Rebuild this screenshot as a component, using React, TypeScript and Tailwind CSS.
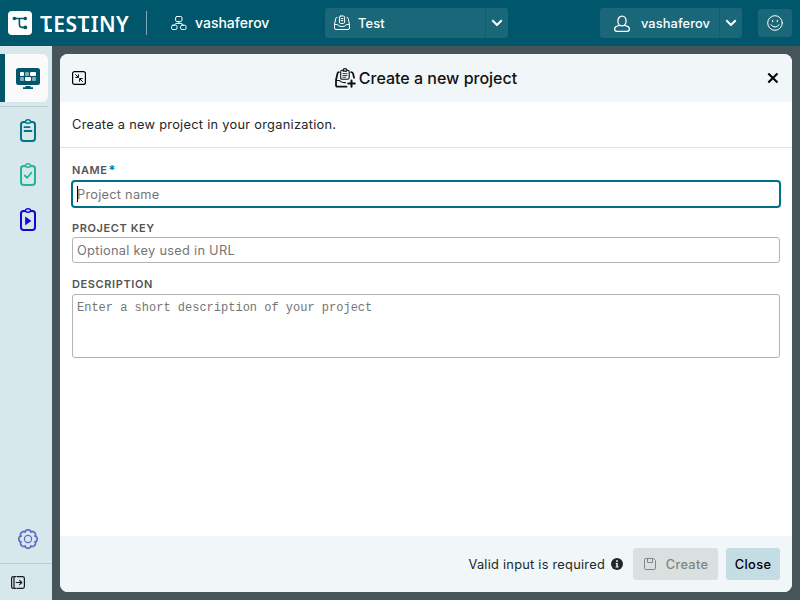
import React from "react";

const Svg = ({
  w,
  h,
  className = "",
  children,
}: {
  w: number;
  h: number;
  className?: string;
  children: React.ReactNode;
}) => (
  <svg
    width={w}
    height={h}
    viewBox={`0 0 ${w} ${h}`}
    fill="none"
    stroke="currentColor"
    strokeLinecap="round"
    strokeLinejoin="round"
    className={`block shrink-0 ${className}`}
  >
    {children}
  </svg>
);

const LogoMark = () => (
  <Svg w={24} h={24}>
    <rect width="24" height="24" rx="4" fill="#fff" stroke="none" />
    <g stroke="#00566b" strokeWidth="1.6">
      <path d="M6.3 7.5H17M11.4 7.5V13.4Q11.4 16.4 14.4 16.4H17" />
    </g>
    <g fill="#00566b" stroke="none">
      <circle cx="6.4" cy="7.5" r="1.8" />
      <circle cx="17.3" cy="7.5" r="1.8" />
      <circle cx="17.3" cy="16.4" r="1.9" />
    </g>
  </Svg>
);

const OrgIcon = () => (
  <Svg w={16} h={16}>
    <rect x="4.6" y="1.5" width="6.4" height="5" rx="1.3" />
    <rect x="0.6" y="10.2" width="5.4" height="4.3" rx="1.3" />
    <rect x="9.6" y="10.2" width="5.4" height="4.3" rx="1.3" />
    <path d="M7.8 6.5V8.4M3.3 10.2L4.8 8.4H10.8L12.3 10.2" />
  </Svg>
);

const ProjectIcon = () => (
  <Svg w={16} h={16}>
    <path d="M3 2.3Q2 2.3 1.8 3.3L.5 9.6V13Q.5 14.5 2 14.5H14Q15.5 14.5 15.5 13V9.6L14.2 3.3Q14 2.3 13 2.3M.7 9.6H3.8Q4.5 11.6 8 11.6T12.2 9.6H15.3" />
    <rect x="5.4" y="1" width="5.2" height="7.4" rx="1.2" />
    <path d="M7.2 3.6H8.8M7.2 5.6H8.8" />
  </Svg>
);

const NewProjectIcon = () => (
  <Svg w={21} h={20}>
    <path d="M3.8 4.2Q2.8 4.2 2.5 5.4L1 12V17Q1 18.7 2.7 18.7H11.5" strokeWidth="1.8" />
    <path d="M16.2 4.2Q17.8 4.2 18.2 6L19 9.8" strokeWidth="1.8" />
    <path d="M1.8 12.5H4.5Q6 14.6 10.5 14.6" strokeWidth="1.2" />
    <path d="M8 2.2H7.3Q5.7 2.2 5.7 3.8V10Q5.7 11.3 7.2 11.3H12.4Q14.2 11.3 14.2 9.8V3.8Q14.2 2.2 12.8 2.2H12" strokeWidth="1.1" />
    <path d="M8.2 3.1V2Q8.2 .6 10 .6T11.8 2V3.1Z" strokeWidth="1.1" />
    <path d="M8 5.6H12M8 7.5H12M8 9.3H10.6" strokeWidth=".8" />
    <path d="M16.5 12.6V18.8M13.3 15.6H19.8" strokeWidth="2" />
  </Svg>
);

const ChevronDown = () => (
  <Svg w={12} h={8}>
    <path d="M2 2L6 6L10 2" strokeWidth="2" strokeLinecap="square" />
  </Svg>
);

const UserIcon = () => (
  <Svg w={18} h={18} className="mt-[2px]">
    <ellipse cx="9" cy="6" rx="4.1" ry="4.9" strokeWidth="1.3" />
    <path d="M6.5 10.3Q1.6 11.3 1.6 13.8Q1.6 16.4 4 16.4H14Q16.4 16.4 16.4 13.8Q16.4 11.3 11.5 10.3" strokeWidth="1.3" />
  </Svg>
);

const SmileIcon = () => (
  <Svg w={16} h={16}>
    <circle cx="8" cy="8" r="7.3" />
    <path d="M5.7 5.2V6.8M10.3 5.2V6.8M4 9.7Q5.3 12 8 12T12 9.7" />
  </Svg>
);

const MonitorIcon = () => (
  <Svg w={24} h={22}>
    <rect width="24" height="17" rx="2.5" fill="#00566b" stroke="none" />
    <path d="M9.5 18H14.5V19.3H17V21H7V19.3H9.5Z" fill="#00566b" stroke="none" />
    <g stroke="none">
      <rect x="4" y="4" width="4" height="4" rx="1" fill="#fff" />
      <rect x="9" y="4" width="4" height="4" rx="1" fill="#8aabb4" />
      <rect x="14" y="4" width="6" height="4" rx="1" fill="#fff" />
      <rect x="4" y="9" width="4" height="4" rx="1" fill="#8aabb4" />
      <rect x="9" y="9" width="6" height="4" rx="1" fill="#fff" />
      <rect x="16" y="9" width="4" height="4" rx="1" fill="#8aabb4" />
    </g>
  </Svg>
);

const Clipboard = ({ className, children }: { className: string; children: React.ReactNode }) => (
  <Svg w={16} h={24} className={className}>
    <rect x="1" y="3" width="14" height="18.9" rx="2.6" strokeWidth="2" />
    <ellipse cx="8" cy="2.5" rx="2.6" ry="1.8" fill="#d6e8ec" strokeWidth="1.4" />
    {children}
  </Svg>
);

const GearIcon = () => {
  const pts: string[] = [];
  for (let i = 0; i <= 96; i++) {
    const a = (i / 96) * Math.PI * 2;
    const r = 7.4 + 1.8 * Math.sqrt(Math.abs(Math.cos(a * 4)));
    pts.push(`${(10 + r * Math.sin(a)).toFixed(2)},${(10 - r * Math.cos(a)).toFixed(2)}`);
  }
  return (
    <Svg w={20} h={20} className="text-[#5f6ac4]">
      <polygon points={pts.join(" ")} strokeWidth="1.7" />
      <circle cx="10" cy="10" r="3.6" strokeWidth="1.2" />
    </Svg>
  );
};

const ExpandIcon = () => (
  <Svg w={14} h={13}>
    <path d="M2.2 .6Q.6 .6 .6 2.2V10.8Q.6 12.4 2.2 12.4" strokeWidth="1.2" />
    <path d="M4.6 .6H3V12.4H4.6M6 .6H11.6Q13.4 .6 13.4 2.4V10.6Q13.4 12.4 11.6 12.4H6" strokeWidth="1.2" />
    <path d="M5.2 6.5H10.8M8.6 4.3L10.8 6.5L8.6 8.7" strokeWidth="1.1" />
  </Svg>
);

const ShrinkIcon = () => (
  <Svg w={14} h={14}>
    <rect x=".6" y=".6" width="12.8" height="12.8" rx="2" strokeWidth="1.2" />
    <path d="M3.3 3.3L6.3 6.3M6.4 3.3V6.4H3.3M10.7 10.7L7.7 7.7M10.7 7.6H7.6V10.7" strokeWidth="1" strokeLinecap="butt" strokeLinejoin="miter" />
  </Svg>
);

const SaveIcon = () => (
  <Svg w={12} h={12}>
    <path d="M.5 1.5Q.5 .5 1.5 .5H9.5L11.5 2.5V10.5Q11.5 11.5 10.5 11.5H1.5Q.5 11.5 .5 10.5ZM3.5 .5V4.5H8.5V.5" />
  </Svg>
);

const InfoIcon = () => (
  <Svg w={12} h={12}>
    <circle cx="6" cy="6" r="6" fill="#222628" stroke="none" />
    <path d="M4.7 5H6.8V8.4H7.6V9.6H4.5V8.4H5.3V6.1H4.7ZM5.2 2.3H6.8V3.9H5.2Z" fill="#f1f6f9" stroke="none" />
  </Svg>
);

/* A wordmark T whose stem ends in a short foot. */
const FootedT = () => (
  <span className="relative mr-[1px] inline-block">
    T
    <span className="absolute bottom-[7px] left-[4.7px] h-[6px] w-[7px] rounded-bl-[4px] border-b-[3px] border-l-[3px] border-white" />
  </span>
);

const Header = () => (
  <header className="flex h-[46px] shrink-0 items-center bg-[#00566b] text-white">
    <div className="flex w-[147px] shrink-0 items-center gap-2 pl-2">
      <LogoMark />
      <div className="pt-px font-['Noto_Sans',sans-serif] text-[21px] leading-[30px] font-semibold tracking-[0.4px] whitespace-nowrap">
        <FootedT />ES<FootedT />INY
      </div>
    </div>
    <div className="-ml-px h-6 w-px bg-[#7fa9b3]" />
    <div className="ml-6 flex w-[154px] items-center gap-2 text-[14px] font-medium">
      <OrgIcon />
      <span className="-mt-[2px]">vashaferov</span>
    </div>
    <div className="flex h-[30px] w-[183px] overflow-hidden rounded-[3px] bg-[#1b677a]">
      <div className="flex w-[161px] items-center gap-2 border-r border-[#0d5e72] pl-[9px] text-[12.8px] font-medium tracking-[0.2px]">
        <ProjectIcon />
        <span className="pt-px">Test</span>
      </div>
      <div className="flex flex-1 items-center justify-center"><ChevronDown /></div>
    </div>
    <div className="ml-auto flex h-[30px] w-[142px] overflow-hidden rounded-[3px] bg-[#1b677a]">
      <div className="flex w-[120px] items-center gap-[10px] border-r border-[#0d5e72] pl-[13px] text-[12.8px] font-medium tracking-[0.1px]">
        <UserIcon />
        <span className="pt-px">vashaferov</span>
      </div>
      <div className="flex flex-1 items-center justify-center"><ChevronDown /></div>
    </div>
    <div className="mr-2 ml-4 flex h-7 w-[34px] items-center justify-center rounded-[3px] bg-[#1b677a]">
      <SmileIcon />
    </div>
  </header>
);

const Sidebar = () => (
  <nav className="flex w-[52px] shrink-0 flex-col bg-[#d6e8ec] pt-2">
    <div className="flex h-12 w-12 items-center justify-center rounded-r-[6px] border-l-[5px] border-[#00566b] bg-[#fafafa] pt-[2px] pl-[3px]">
      <MonitorIcon />
    </div>
    <div className="mt-1 h-px w-12 bg-[#b8cdd2]" />
    <div className="mt-3 flex flex-col items-center gap-5 pl-1">
      <Clipboard className="text-[#007489]">
        <path d="M4.5 8.2H9.5M4.5 12H11.5" strokeWidth="1.8" />
      </Clipboard>
      <Clipboard className="text-[#25b399]">
        <path d="M4.7 12.5L7.2 14.8L11.3 9.8" strokeWidth="1.8" />
      </Clipboard>
      <Clipboard className="mt-px text-[#1805d5]">
        <path d="M5.8 9.3L10.8 12.9L5.8 16.5Z" fill="currentColor" strokeWidth=".8" />
      </Clipboard>
    </div>
    <div className="mt-auto mb-[14px] flex justify-center pl-1"><GearIcon /></div>
    <div className="flex h-[37px] items-center border-t border-[#b8cdd2] pl-[11px] text-[#15191b]">
      <ExpandIcon />
    </div>
  </nav>
);

const Label = ({ children }: { children: React.ReactNode }) => (
  <label className="block h-4 text-[11px] leading-4 font-semibold tracking-[0.6px] text-[#555]">{children}</label>
);

const Dialog = () => (
  <section className="m-2 flex min-w-0 flex-1 flex-col overflow-hidden rounded-[8px] bg-white">
    <div className="flex h-12 shrink-0 items-center justify-between bg-[#f1f6f9] px-3 text-black">
      <ShrinkIcon />
      <h1 className="flex items-center gap-[3px] text-[16px] font-medium text-[#111]">
        <NewProjectIcon />
        Create a new project
      </h1>
      <Svg w={14} h={14}>
        <path d="M2.3 2.5L11.5 11.5M11.5 2.5L2.3 11.5" strokeWidth="2.1" strokeLinecap="butt" />
      </Svg>
    </div>
    <p className="h-[46px] shrink-0 border-b border-[#e0e2e3] px-3 text-[12.8px] leading-[45px] tracking-[0.28px]">
      Create a new project in your organization.
    </p>
    <form className="flex-1 px-3 pt-[14px]">
      <Label>
        NAME<span className="relative top-px ml-[1px] text-[13px] leading-none text-[#007c92]">*</span>
      </Label>
      <div className="relative -mx-px mt-[2px]">
        <input
          className="block h-7 w-full rounded-[4px] border-2 border-[#007089] bg-white px-1 text-[12.8px] tracking-[0.25px] outline-none placeholder:text-[#757575]"
          placeholder="Project name"
        />
        <span className="absolute top-[6px] left-[6px] h-4 w-px bg-black" />
      </div>
      <div className="mt-3">
        <Label>PROJECT KEY</Label>
        <input
          className="mt-px block h-[26px] w-full rounded-[3px] border border-[#b3b3b3] bg-white px-1 text-[12.8px] tracking-[0.28px] outline-none placeholder:text-[#757575]"
          placeholder="Optional key used in URL"
        />
      </div>
      <div className="mt-[13px]">
        <Label>DESCRIPTION</Label>
        <textarea
          className="mt-[2px] block h-16 w-full resize-none rounded-[3px] border border-[#b3b3b3] bg-white px-1 py-[5px] font-['Liberation_Mono',monospace] text-[12px] leading-4 outline-none placeholder:text-[#757575]"
          placeholder="Enter a short description of your project"
        />
      </div>
    </form>
    <footer className="flex h-14 shrink-0 items-center justify-end bg-[#f1f6f9] pr-3 text-[12.8px] tracking-[0.25px]">
      <span className="mr-[6px] pt-px">Valid input is required</span>
      <InfoIcon />
      <button className="ml-[10px] flex h-8 w-[85px] items-center justify-center gap-[10px] rounded-[3px] bg-[#dae0e0] pl-px font-medium tracking-[0.3px] text-[#808585]">
        <SaveIcon />
        <span className="pt-px">Create</span>
      </button>
      <button className="ml-2 h-8 w-[54px] rounded-[3px] bg-[#c4dde4] pt-px font-medium tracking-[0.4px] text-black">
        Close
      </button>
    </footer>
  </section>
);

export default function App() {
  return (
    <div className="flex h-[600px] w-[800px] flex-col overflow-hidden bg-[#465559] font-['Inter',sans-serif] text-[#222628]">
      <Header />
      <div className="flex min-h-0 flex-1">
        <Sidebar />
        <Dialog />
      </div>
    </div>
  );
}
